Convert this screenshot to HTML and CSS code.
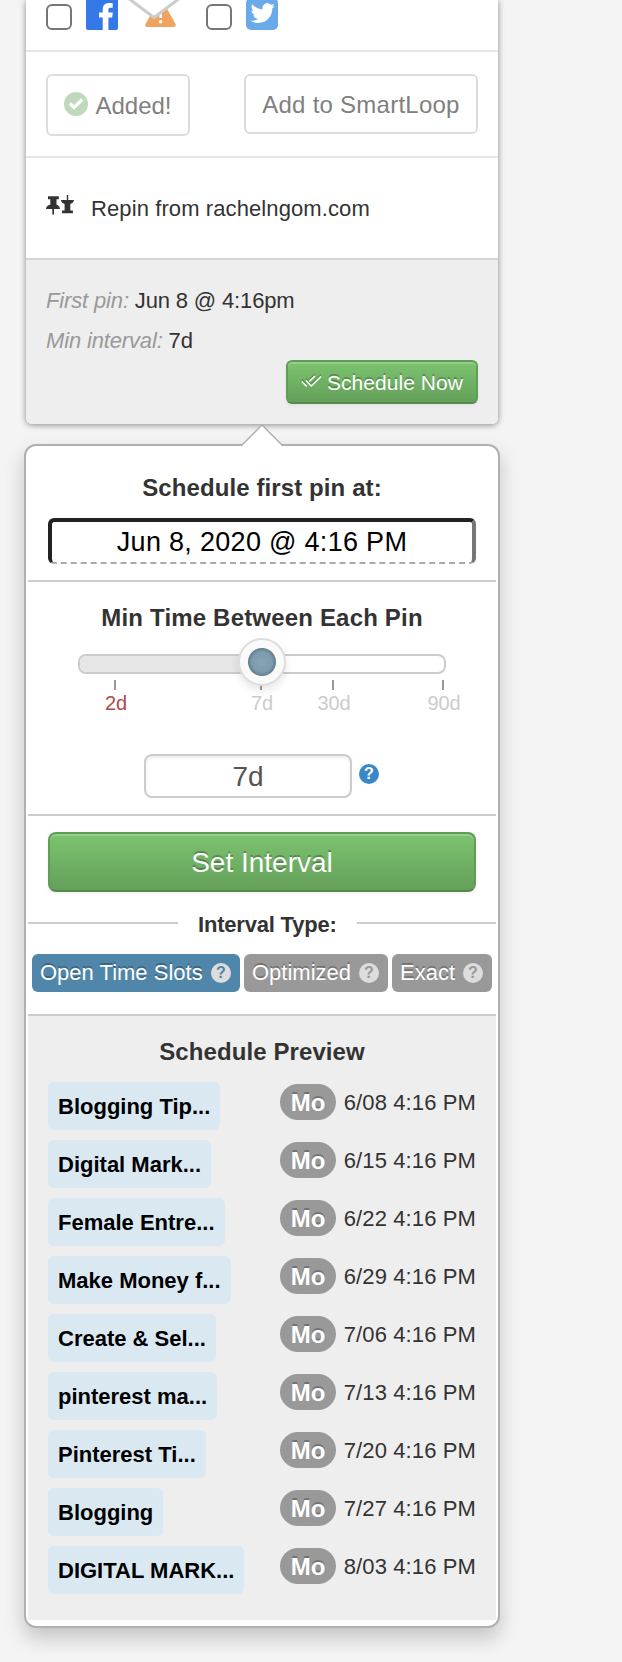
FILE: index.html
```
<!DOCTYPE html>
<html lang="en">
<head>
  <meta charset="UTF-8">
  <meta name="viewport" content="width=device-width, initial-scale=1.0">
  <title>Schedule Pins</title>
  <link rel="stylesheet" href="styles.css">
</head>
<body>
  <section class="card">
    <div class="networks">
      <span class="checkbox"></span>
      <svg class="network facebook" width="32" height="32" viewBox="0 0 32 32">
        <rect width="32" height="32" rx="2" fill="#3578e8"/>
        <path d="M16.7 32V19.4H13v-5h3.7v-3.2c0-4 2.4-6.3 6.2-6.3 1.6 0 3.3.2 3.8.3v4.5h-2.4c-1.5 0-1.9.9-1.9 2v2.7h4.5l-.8 5h-3.7V32z" fill="#fff"/>
      </svg>
      <svg class="network email" width="52" height="32" viewBox="0 0 52 32">
        <path d="M30.6 2.5c.9-1.5 2.9-1.5 3.8 0l13 23.2c.8 1.4.2 3.3-1.8 3.3H19.400c-2 0-2.600-1.900-1.800-3.300z" fill="#efa35f"/>
        <rect x="31.300" y="13" width="2.600" height="7" fill="#fff"/>
        <circle cx="32.600" cy="23.800" r="1.800" fill="#fff"/>
        <path d="M0 0l26 19.500L52 0z" fill="#fff"/>
        <path d="M0 0l26 19.500L52 0" fill="none" stroke="#ccc" stroke-width="3"/>
      </svg>
      <span class="checkbox"></span>
      <svg class="network twitter" width="32" height="32" viewBox="0 0 32 32">
        <rect width="32" height="32" rx="5" fill="#6aaae8"/>
        <path transform="translate(4.500 3) scale(.0475)" fill="#fff" d="M459.370 151.716c.325 4.548.325 9.097.325 13.645 0 138.720-105.583 298.558-298.558 298.558-59.452 0-114.680-17.219-161.137-47.106 8.447.974 16.568 1.299 25.340 1.299 49.055 0 94.213-16.568 130.274-44.832-46.132-.975-84.792-31.188-98.112-72.772 6.498.974 12.995 1.624 19.818 1.624 9.421 0 18.843-1.300 27.614-3.573-48.081-9.747-84.143-51.980-84.143-102.985v-1.299c13.969 7.797 30.214 12.670 47.431 13.319-28.264-18.843-46.781-51.005-46.781-87.391 0-19.492 5.197-37.360 14.294-52.954 51.655 63.675 129.300 105.258 216.365 109.807-1.624-7.797-2.599-15.918-2.599-24.040 0-57.828 46.782-104.934 104.934-104.934 30.213 0 57.502 12.670 76.670 33.137 23.715-4.548 46.456-13.320 66.599-25.340-7.798 24.366-24.366 44.833-46.132 57.827 21.117-2.273 41.584-8.122 60.426-16.243-14.292 20.791-32.161 39.308-52.628 54.253z"/>
      </svg>
    </div>

    <div class="smartloop">
      <button class="btn-added">
        <svg width="24" height="24" viewBox="0 0 24 24">
          <circle cx="12" cy="12" r="12" fill="#c0d9bd"/>
          <path d="M6 11.500l4 4L18.300 7.500" fill="none" stroke="#fff" stroke-width="3.200"/>
        </svg>
        <span>Added!</span>
      </button>
      <button class="btn-add">Add to SmartLoop</button>
    </div>

    <div class="repin">
      <svg width="28" height="20" viewBox="0 0 28 20" fill="#333">
        <path d="M2 1.300h10.800v3h-2.300v5.400c2.100.6 3.300 2.100 3.500 4.400H8v5.400H6.300v-5.400H0c.2-2.300 1.400-3.800 4.300-4.400V4.300H2z"/>
        <path d="M20.800 0h1.400v5H28c-.3 2-1.500 3.300-3.700 4v6.500h2.600v2.800H16v-2.800h2.600V9c-2.200-.7-3.400-2-3.700-4h5.900z"/>
      </svg>
      <span>Repin from rachelngom.com</span>
    </div>

    <div class="summary">
      <p><em>First pin:</em> Jun 8 @ 4:16pm</p>
      <p><em>Min interval:</em> 7d</p>
      <button class="btn-green btn-schedule">
        <svg width="21" height="13" viewBox="0 0 21 13" fill="none" stroke="#fff" stroke-width="1.500">
          <path d="M.8 6.500l5 5M4.800 5.500l5.500 5.500L20 1.500M8.300 6.500L14 1"/>
        </svg>
        <span>Schedule Now</span>
      </button>
    </div>
  </section>

  <section class="popover">
    <svg class="arrow" width="44" height="23" viewBox="0 0 44 23">
      <path d="M0 23L22 1l22 22z" fill="#fff"/>
      <path d="M1 22L22 1l21 21" fill="none" stroke="#aaa" stroke-width="1.300"/>
    </svg>

    <div class="first-pin">
      <h3>Schedule first pin at:</h3>
      <div class="date-input">Jun 8, 2020 @ 4:16 PM</div>
    </div>

    <div class="interval">
      <h3>Min Time Between Each Pin</h3>
      <div class="slider">
        <div class="slider-fill" style="width: 50%"></div>
        <div class="slider-handle"></div>
      </div>
      <div class="scale">
        <span class="danger">2d</span>
        <span>7d</span>
        <span>30d</span>
        <span>90d</span>
      </div>
      <div class="interval-value">
        <div class="interval-input">7d</div>
        <span class="help help-blue">?</span>
      </div>
    </div>

    <div class="actions">
      <button class="btn-green btn-set">Set Interval</button>
      <div class="divider">Interval Type:</div>
      <div class="types">
        <span class="type active">Open Time Slots <i class="help">?</i></span>
        <span class="type">Optimized <i class="help">?</i></span>
        <span class="type">Exact <i class="help">?</i></span>
      </div>
    </div>

    <div class="preview">
      <h3>Schedule Preview</h3>
      <ul>
        <li><b class="board">Blogging Tip...</b><span class="day">Mo</span><span class="date">6/08 4:16 PM</span></li>
        <li><b class="board">Digital Mark...</b><span class="day">Mo</span><span class="date">6/15 4:16 PM</span></li>
        <li><b class="board">Female Entre...</b><span class="day">Mo</span><span class="date">6/22 4:16 PM</span></li>
        <li><b class="board">Make Money f...</b><span class="day">Mo</span><span class="date">6/29 4:16 PM</span></li>
        <li><b class="board">Create &amp; Sel...</b><span class="day">Mo</span><span class="date">7/06 4:16 PM</span></li>
        <li><b class="board">pinterest ma...</b><span class="day">Mo</span><span class="date">7/13 4:16 PM</span></li>
        <li><b class="board">Pinterest Ti...</b><span class="day">Mo</span><span class="date">7/20 4:16 PM</span></li>
        <li><b class="board">Blogging</b><span class="day">Mo</span><span class="date">7/27 4:16 PM</span></li>
        <li><b class="board">DIGITAL MARK...</b><span class="day">Mo</span><span class="date">8/03 4:16 PM</span></li>
      </ul>
    </div>
  </section>
</body>
</html>
```
FILE: styles.css
```
* { margin: 0; padding: 0; box-sizing: border-box; }
body { font-family: "Helvetica Neue", "Liberation Sans", Arial, sans-serif; font-size: 22px; color: #333; background: #f4f4f4; }
svg { display: block; flex: none; }
button { font-family: inherit; display: flex; align-items: center; justify-content: center; }
h3 { font-size: 24px; line-height: 40px; letter-spacing: .1px; text-align: center; }

/* pin card */
.card { width: 472px; margin-left: 26px; background: #fff; border-radius: 0 0 6px 6px; box-shadow: 0 1px 6px rgba(0,0,0,.45); }
.networks { display: flex; align-items: flex-start; height: 52px; padding-left: 20px; border-bottom: 2px solid #e5e5e5; overflow: hidden; }
.checkbox { width: 26px; height: 26px; margin: 4px 14px 0 0; border: 2px solid #767676; border-radius: 6px; background: #fff; }
.network { margin-top: -2px; }
.email { margin: -2px 26px 0 10px; }
.smartloop { display: flex; justify-content: space-between; align-items: flex-start; height: 106px; padding: 22px 20px 0; border-bottom: 2px solid #e5e5e5; }
.smartloop button { padding-top: 2px; font-size: 24px; color: #808080; background: #fff; border: 2px solid #ddd; border-radius: 6px; }
.btn-added { width: 144px; height: 62px; gap: 7px; }
.btn-added svg { margin-top: -4px; }
.btn-add { width: 234px; height: 60px; letter-spacing: .25px; }
.repin { display: flex; align-items: center; gap: 17px; height: 102px; padding-left: 20px; border-bottom: 2px solid #d4d4d4; letter-spacing: .1px; }
.repin span { padding-top: 2px; }
.repin svg { margin-top: -6px; }
.summary { padding: 21px 20px 20px; background: #eee; border-radius: 0 0 6px 6px; letter-spacing: -.15px; }
.summary p { line-height: 40px; }
.summary em { color: #999; }

.btn-green { color: #fff; text-shadow: 0 -2px 0 rgba(0,0,0,.25); background: linear-gradient(#7cc36f, #64a05a); border: 2px solid #5f9f55; border-bottom-color: #548a4b; border-radius: 6px; box-shadow: inset 0 2px 0 rgba(255,255,255,.2), 0 2px 4px rgba(0,0,0,.05); }
.btn-schedule { width: 192px; height: 44px; margin: -1px 0 0 auto; padding-top: 1px; gap: 5px; font-size: 21px; letter-spacing: .05px; }
.btn-schedule svg { margin-top: -3px; filter: drop-shadow(0 -2px 0 rgba(0,0,0,.2)); }

/* scheduling popover */
.popover { position: relative; width: 476px; margin: 20px 0 34px 24px; padding: 0 2px 6px; background: #fff; border: 2px solid #b0b0b0; border-radius: 12px; box-shadow: 0 10px 20px rgba(0,0,0,.2); }
.arrow { position: absolute; top: -22px; left: 214px; }
.first-pin { padding: 22px 20px 16px; border-bottom: 2px solid #ccc; }
.date-input { height: 46px; margin-top: 10px; font-size: 27px; line-height: 41px; letter-spacing: .3px; text-align: center; color: #000; border: 4px solid #222; border-right-color: #777; border-bottom: 2px dashed #aaa; border-radius: 6px; }

.interval { padding: 16px 20px; border-bottom: 2px solid #ccc; }
.interval h3 { letter-spacing: .18px; }
.slider { position: relative; height: 20px; margin: 16px 30px 0; border: 2px solid #ccc; border-radius: 8px; box-shadow: inset 0 0 0 1px #fff; }
.slider-fill { height: 16px; background: #e6e6e6; border-radius: 6px 0 0 6px; }
.slider-handle { position: absolute; top: -18px; left: 158px; width: 48px; height: 48px; background: radial-gradient(circle, #87a3b6 0, #7d9bad 10px, #667f8e 13.500px, rgba(250,250,250,.95) 14.500px); border: 2px solid #ddd; border-radius: 50%; box-shadow: 0 4px 8px rgba(0,0,0,.1); }
.scale { display: flex; padding: 6px 0 0 47px; font-size: 20px; line-height: 22px; letter-spacing: -.2px; color: #ccc; }
.scale span { width: 42px; text-align: center; }
.scale span::before { content: ""; display: block; width: 2px; height: 10px; margin: 0 auto 2px 19px; background: #999; }
.scale .danger { color: #b04a48; }
.scale span:nth-child(2) { margin-left: 104px; }
.scale span:nth-child(3) { margin-left: 30px; }
.scale span:nth-child(4) { margin-left: 68px; }
.interval-value { display: flex; gap: 7px; margin: 40px 0 0 96px; }
.interval-input { width: 208px; height: 44px; font-size: 28px; line-height: 41px; text-align: center; color: #555; border: 2px solid #ccc; border-radius: 8px; box-shadow: inset 0 2px 3px rgba(0,0,0,.08); }
.help { width: 20px; height: 20px; font-size: 16px; line-height: 20px; font-style: normal; font-weight: bold; text-align: center; text-shadow: none; color: #999; background: #ddd; border-radius: 50%; }
.help-blue { margin-top: 10px; color: #fff; background: #3a87c8; }

.actions { padding-bottom: 22px; border-bottom: 2px solid #ccc; }
.btn-set { width: 428px; height: 60px; margin: 16px 20px 12px; padding-top: 1px; font-size: 28px; border-radius: 8px; }
.divider { display: flex; align-items: center; gap: 20px; height: 41px; font-weight: bold; letter-spacing: -.2px; }
.divider::before, .divider::after { content: ""; height: 2px; margin-bottom: 3px; background: #ccc; }
.divider::before { width: 150px; }
.divider::after { flex: 1; }
.types { display: flex; gap: 4px; padding: 9px 4px 0; }
.type { display: flex; align-items: center; justify-content: space-between; height: 38px; width: 144px; padding: 0 9px 0 8px; color: #fff; background: #999; border-radius: 6px; text-shadow: 0 -2px 0 rgba(0,0,0,.25); white-space: nowrap; }
.type.active { width: 208px; background: #4f86a9; }
.type.active .help { color: #4f86a9; }
.type:last-child { width: 100px; }

.preview { padding: 16px 20px 26px; background: #eee; }
.preview ul { display: flex; flex-direction: column; gap: 10px; margin-top: 10px; list-style: none; }
.preview li { display: flex; height: 48px; line-height: 41px; white-space: nowrap; }
.board { padding: 0 10px; margin-right: auto; line-height: 49px; color: #000; background: #dae8f2; border-radius: 6px; }
.day { width: 56px; height: 36px; margin: 2px 6px 0 0; font-size: 24px; line-height: 37px; font-weight: bold; text-align: center; color: #fff; text-shadow: 0 -2px 0 rgba(0,0,0,.25); background: #999; border-radius: 18px; }
.date { width: 134px; text-align: right; letter-spacing: .12px; }
```
